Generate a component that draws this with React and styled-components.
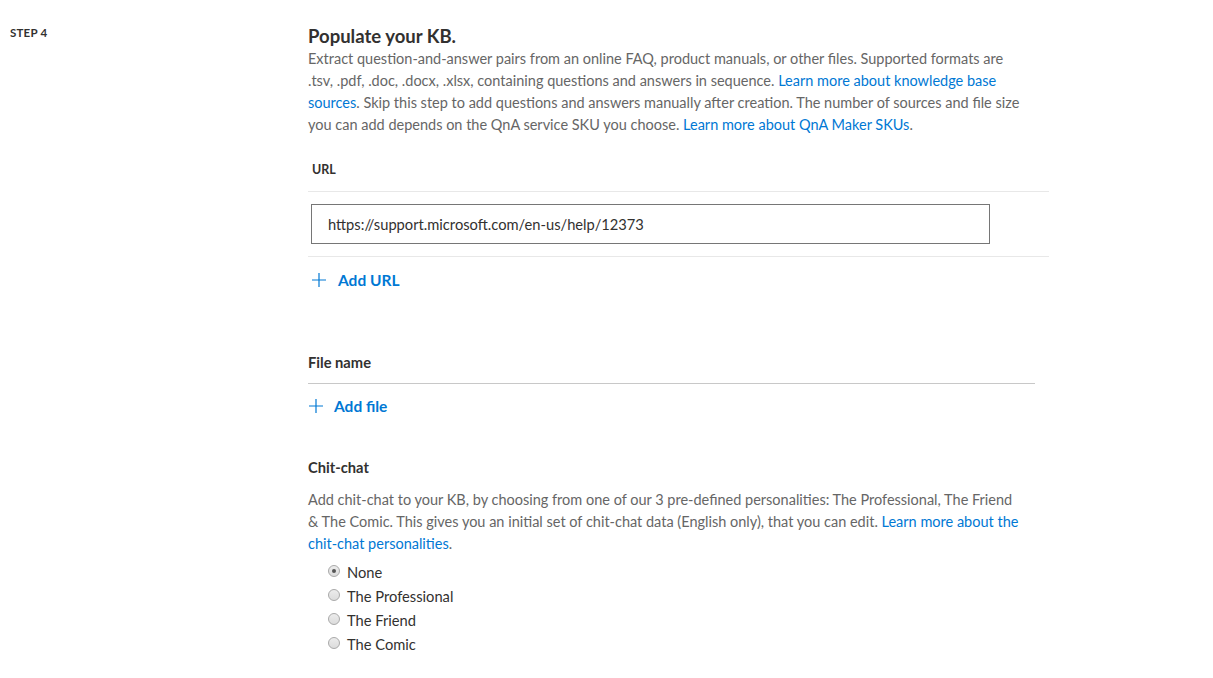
import React, { useState } from 'react'
import { createGlobalStyle, styled } from 'styled-components'

const GlobalStyle = createGlobalStyle`
  body {
    margin: 0;
    background: #fff;
    font-family: Lato, "Open Sans", sans-serif;
    color: #323130;
  }
`

const Page = styled('div')`
  display: flex;
  padding-top: 24px;
`

const StepColumn = styled('div')`
  width: 298px;
  padding-left: 10px;
  flex-shrink: 0;
`

const StepLabel = styled('div')`
  font-size: 11.5px;
  font-weight: 700;
  color: #323130;
  letter-spacing: 0.2px;
  margin-top: 2px;
`

const Content = styled('div')`
  width: 741px;
`

const Title = styled('h2')`
  margin: 0;
  font-size: 18.5px;
  font-weight: 700;
  line-height: 24px;
  color: #323130;
`

const Text = styled('p')`
  margin: 0;
  font-size: 14.5px;
  line-height: 22px;
  color: #666666;
  width: ${p => p.$width}px;
  margin-top: ${p => p.$top || 0}px;
`

const Link = styled('a')`
  color: #0078d4;
  text-decoration: none;
  cursor: pointer;
`

const TableHead = styled('div')`
  padding: 12px 4px 14px;
  font-size: 12.5px;
  font-weight: 700;
  color: #323130;
  border-bottom: 1px solid #e8e8e8;
  margin-top: 14px;
`

const TableRow = styled('div')`
  padding: 12px 0 12px 3px;
  border-bottom: 1px solid #e8e8e8;
`

const UrlInput = styled('input')`
  box-sizing: border-box;
  width: 679px;
  height: 40px;
  border: 1px solid #767676;
  padding: 0 16px;
  font-family: inherit;
  font-size: 14.7px;
  color: #323130;
  outline: none;
`

const AddButton = styled('button')`
  display: flex;
  align-items: center;
  gap: ${p => p.$gap}px;
  background: none;
  border: none;
  padding: 0 0 0 ${p => p.$indent}px;
  margin-top: ${p => p.$top}px;
  font-family: inherit;
  font-size: 15.5px;
  font-weight: 700;
  color: #0078d4;
  cursor: pointer;
  height: 22px;
`

const SectionTitle = styled('div')`
  font-size: 14.7px;
  font-weight: 700;
  line-height: 20px;
  color: #323130;
  margin-top: ${p => p.$top}px;
`

const FileTable = styled('div')`
  width: 727px;
  border-top: 1px solid #c8c8c8;
  margin-top: 11px;
`

const RadioList = styled('div')`
  display: flex;
  flex-direction: column;
  padding-left: 20px;
  margin-top: 5px;
`

const RadioRow = styled('label')`
  display: flex;
  align-items: center;
  gap: 7px;
  height: 24px;
  font-size: 14.7px;
  color: #323130;
  cursor: pointer;
`

const RadioDot = styled('span')`
  box-sizing: border-box;
  width: 12px;
  height: 12px;
  border-radius: 50%;
  border: 1px solid #a9a9a9;
  background: linear-gradient(#ececec, #dcdcdc);
  display: flex;
  align-items: center;
  justify-content: center;
  margin-top: -2px;

  &::after {
    content: '';
    width: 4px;
    height: 4px;
    border-radius: 50%;
    background: ${p => (p.$checked ? '#555' : 'transparent')};
  }
`

const Plus = () => (
  <svg width="16" height="16" viewBox="0 0 16 16">
    <path d="M8 1v14M1 8h14" stroke="#0078d4" strokeWidth="1.2" fill="none" />
  </svg>
)

const personalities = ['None', 'The Professional', 'The Friend', 'The Comic']

export default function App() {
  const [picked, setPicked] = useState('None')

  return (
    <>
      <GlobalStyle />
      <Page>
        <StepColumn>
          <StepLabel>STEP 4</StepLabel>
        </StepColumn>
        <Content>
          <Title>Populate your KB.</Title>
          <Text $width={718}>
            Extract question-and-answer pairs from an online FAQ, product manuals, or other files. Supported formats are
            .tsv, .pdf, .doc, .docx, .xlsx, containing questions and answers in sequence.{' '}
            <Link>Learn more about knowledge base sources</Link>. Skip this step to add questions and answers manually
            after creation. The number of sources and file size you can add depends on the QnA service SKU you choose.{' '}
            <Link>Learn more about QnA Maker SKUs</Link>.
          </Text>

          <TableHead>URL</TableHead>
          <TableRow>
            <UrlInput defaultValue="https://support.microsoft.com/en-us/help/12373" />
          </TableRow>
          <AddButton $indent={3} $gap={11} $top={12}>
            <Plus /> Add URL
          </AddButton>

          <SectionTitle $top={61}>File name</SectionTitle>
          <FileTable>
            <AddButton $indent={0} $gap={10} $top={11}>
              <Plus /> Add file
            </AddButton>
          </FileTable>

          <SectionTitle $top={40}>Chit-chat</SectionTitle>
          <Text $width={714} $top={12}>
            Add chit-chat to your KB, by choosing from one of our 3 pre-defined personalities: The Professional, The
            Friend &amp; The Comic. This gives you an initial set of chit-chat data (English only), that you can edit.{' '}
            <Link>Learn more about the chit-chat personalities</Link>.
          </Text>
          <RadioList>
            {personalities.map(name => (
              <RadioRow key={name} onClick={() => setPicked(name)}>
                <RadioDot $checked={picked === name} />
                {name}
              </RadioRow>
            ))}
          </RadioList>
        </Content>
      </Page>
    </>
  )
}
